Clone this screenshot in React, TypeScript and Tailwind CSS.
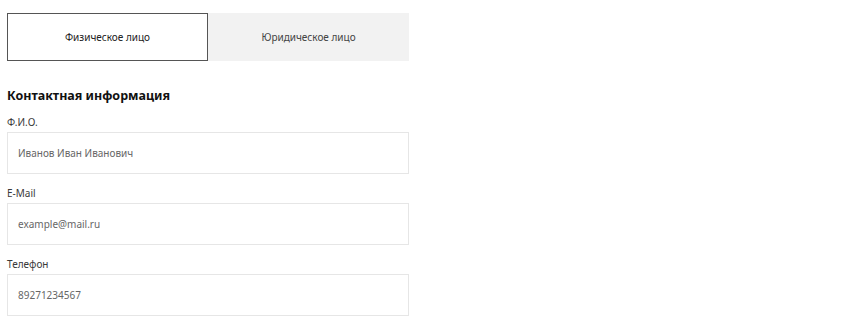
import { useState } from "react";

const fields = [
  { label: "Ф.И.О.", value: "Иванов Иван Иванович" },
  { label: "E-Mail", value: "example@mail.ru" },
  { label: "Телефон", value: "89271234567" },
];

export default function App() {
  const [kind, setKind] = useState<"person" | "company">("person");

  return (
    <div
      className="min-h-screen bg-white px-[7px] pt-[13px]"
      style={{ fontFamily: '"Noto Sans", "Open Sans", sans-serif' }}
    >
      <div className="w-[402px]">
        <div className="grid h-12 grid-cols-2">
          <button
            type="button"
            onClick={() => setKind("person")}
            className={
              kind === "person"
                ? "border border-[#555] bg-white text-[10px] text-[#222]"
                : "bg-[#f2f2f2] text-[10px] text-[#444]"
            }
          >
            Физическое лицо
          </button>
          <button
            type="button"
            onClick={() => setKind("company")}
            className={
              kind === "company"
                ? "border border-[#555] bg-white text-[10px] text-[#222]"
                : "bg-[#f2f2f2] text-[10px] text-[#444]"
            }
          >
            Юридическое лицо
          </button>
        </div>

        <h2 className="mt-[26px] text-[12.5px] font-bold leading-[18px] text-[#111]">
          Контактная информация
        </h2>

        <div className="mt-[9px] flex flex-col gap-[11px]">
          {fields.map((f) => (
            <label key={f.label} className="block">
              <span className="block text-[10px] leading-[17px] text-[#3a3a3a]">
                {f.label}
              </span>
              <input
                defaultValue={f.value}
                className="mt-px block h-[42px] w-full border border-[#e6e6e6] px-[10px] text-[10px] text-[#666] outline-none"
              />
            </label>
          ))}
        </div>
      </div>
    </div>
  );
}
